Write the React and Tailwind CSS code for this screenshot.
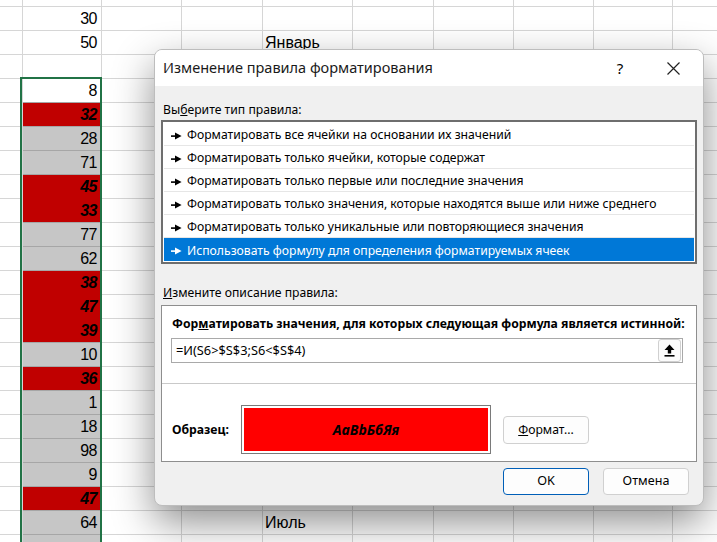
import React from "react";

const colW = ["w-[23px]", "w-[79px]", "w-[80px]", "w-[81px]", "w-[90px]", "w-[81px]", "w-[80px]", "w-[80px]", "w-[79px]", "w-[80px]"];

const rows = [
  { v: "30", t: "n" },
  { v: "50", t: "n", txt: "Январь" },
  { v: "", t: "n" },
  { v: "8", t: "a" },
  { v: "32", t: "r" },
  { v: "28", t: "g" },
  { v: "71", t: "g" },
  { v: "45", t: "r" },
  { v: "33", t: "r" },
  { v: "77", t: "g" },
  { v: "62", t: "g" },
  { v: "38", t: "r" },
  { v: "47", t: "r" },
  { v: "39", t: "r" },
  { v: "10", t: "g" },
  { v: "36", t: "r" },
  { v: "1", t: "g" },
  { v: "18", t: "g" },
  { v: "98", t: "g" },
  { v: "9", t: "g" },
  { v: "47", t: "r" },
  { v: "64", t: "g", txt: "Июль" },
  { v: "", t: "g" },
];

function Sheet() {
  return (
    <div className="flex flex-col font-['Liberation_Sans',sans-serif] text-[16px] text-black">
      <div className="flex h-[7px]">
        {colW.map((w, i) => (
          <div key={i} className={`${w} shrink-0 border-r border-b border-[#d6d6d6]`} />
        ))}
      </div>
      {rows.map((r, ri) => {
        const next = rows[ri + 1];
        return (
          <div key={ri} className="flex h-[24px]">
            {colW.map((w, ci) => {
              if (ci === 1) {
                let cls = "border-[#d6d6d6] bg-white";
                let fcls = "";
                if (r.t === "a") cls = "border-[#a6a6a6] bg-white";
                if (r.t === "g") cls = "border-[#a6a6a6] bg-[#c6c6c6]";
                if (r.t === "r") {
                  cls = next && next.t === "r" ? "border-[#c00000] bg-[#c00000]" : "border-[#a6a6a6] bg-[#c00000]";
                  fcls = "font-bold italic";
                }
                return (
                  <div
                    key={ci}
                    className={`${w} shrink-0 border-r border-b border-r-[#d6d6d6] ${cls} flex items-center justify-end pr-[4px] pt-[1px] tracking-[-0.5px] ${fcls}`}
                  >
                    {r.v}
                  </div>
                );
              }
              return (
                <div
                  key={ci}
                  className={`${w} shrink-0 border-r border-b border-[#d6d6d6] flex items-center pl-[2px] pt-[1px]`}
                >
                  {ci === 4 && r.txt ? r.txt : ""}
                </div>
              );
            })}
          </div>
        );
      })}
    </div>
  );
}

function Arrow({ white }) {
  const c = white ? "#fff" : "#000";
  return (
    <svg width="11" height="8" viewBox="0 0 11 8" className="shrink-0">
      <rect x="0" y="3.3" width="5" height="1.6" fill={c} />
      <polygon points="4,0.6 10.6,4.1 4,7.6" fill={c} />
    </svg>
  );
}

const items = [
  "Форматировать все ячейки на основании их значений",
  "Форматировать только ячейки, которые содержат",
  "Форматировать только первые или последние значения",
  "Форматировать только значения, которые находятся выше или ниже среднего",
  "Форматировать только уникальные или повторяющиеся значения",
  "Использовать формулу для определения форматируемых ячеек",
];

function Dialog() {
  return (
    <div className="absolute left-[154px] top-[49px] w-[550px] h-[457px] rounded-[8px] overflow-hidden border border-[#bdbdbd] bg-[#f0f0f0] shadow-[0_16px_40px_rgba(0,0,0,0.45)] font-['Noto_Sans',sans-serif] text-[12.2px] text-black flex flex-col">
      <div className="h-[36px] bg-white flex items-center pl-[8px] shrink-0">
        <div className="text-[14.5px] text-[#1a1a1a] flex-1 whitespace-nowrap">Изменение правила форматирования</div>
        <div className="text-[15px] w-[20px] text-center mr-[37px]">?</div>
        <svg width="13" height="13" viewBox="0 0 13 13" className="mr-[23px]">
          <path d="M0.5 0.5 L12.5 12.5 M12.5 0.5 L0.5 12.5" stroke="#222" strokeWidth="1.2" />
        </svg>
      </div>
      <div className="flex flex-col px-[6px]">
        <div className="h-[18px] mt-[15px] pl-[2px] flex items-center whitespace-nowrap">
          <span>
            Вы<span className="underline">б</span>ерите тип правила:
          </span>
        </div>
        <div className="mt-[1px] border-2 border-[#6e6e6e] bg-white p-px">
          {items.map((it, i) => {
            const sel = i === items.length - 1;
            return (
              <div
                key={i}
                className={`h-[23px] flex items-center gap-[5px] pl-[7px] pt-[3px] whitespace-nowrap ${sel ? "bg-[#0078d7] text-white" : "border-b border-[#e6e6e6]"}`}
              >
                <Arrow white={sel} />
                <span>{it}</span>
              </div>
            );
          })}
        </div>
        <div className="h-[18px] mt-[20px] pl-[2px] flex items-center whitespace-nowrap">
          <span>
            <span className="underline">И</span>змените описание правила:
          </span>
        </div>
        <div className="mt-[3px] h-[157px] border border-[#8e8e8e] bg-white flex flex-col">
          <div className="h-[18px] mt-[9px] pl-[10px] flex items-center font-bold whitespace-nowrap">
            <span>
              Фор<span className="underline">м</span>атировать значения, для которых следующая формула является истинной:
            </span>
          </div>
          <div className="mt-[5px] ml-[9px] mr-[13px] h-[25px] border border-[#a9a9a9] flex items-center">
            <div className="flex-1 pl-[4px] whitespace-nowrap text-[12.8px]">=И(S6&gt;$S$3;S6&lt;$S$4)</div>
            <div className="w-[23px] h-[23px] mr-px rounded-[3px] border border-[#d0d0d0] bg-[#fbfbfb] flex items-center justify-center">
              <svg width="11" height="13" viewBox="0 0 11 13">
                <polygon points="5.5,0.5 10.5,6 7.2,6 7.2,9.5 3.8,9.5 3.8,6 0.5,6" fill="#000" />
                <rect x="0.5" y="11" width="10" height="1.6" fill="#000" />
              </svg>
            </div>
          </div>
          <div className="mt-[20px] h-px bg-[#c9c9c9]" />
          <div className="flex items-start mt-[21px]">
            <div className="w-[79px] pl-[10px] font-bold mt-[16px] whitespace-nowrap">Образец:</div>
            <div className="w-[250px] h-[49px] border border-[#7a7a7a] p-[2px] bg-white">
              <div className="w-full h-full bg-[#ff0000] flex items-center justify-center font-bold italic text-[14px]">
                AaBbБбЯя
              </div>
            </div>
            <div className="ml-[12px] mt-[11px] w-[86px] h-[28px] rounded-[4px] border border-[#d0d0d0] bg-[#fdfdfd] flex items-center justify-center whitespace-nowrap">
              <span>
                <span className="underline">Ф</span>ормат...
              </span>
            </div>
          </div>
        </div>
        <div className="flex justify-end gap-[14px] mt-[6px] mr-[8px] text-[12.6px]">
          <div className="w-[86px] h-[27px] rounded-[4px] border border-[#005fb8] bg-[#fdfdfd] flex items-center justify-center">
            OK
          </div>
          <div className="w-[86px] h-[27px] rounded-[4px] border border-[#d0d0d0] bg-[#fdfdfd] flex items-center justify-center">
            Отмена
          </div>
        </div>
      </div>
    </div>
  );
}

export default function App() {
  return (
    <div className="relative w-[717px] h-[542px] overflow-hidden bg-white">
      <Sheet />
      <div className="absolute left-[20px] top-[77px] w-[82px] h-[480px] border-2 border-[#217346]" />
      <Dialog />
    </div>
  );
}
